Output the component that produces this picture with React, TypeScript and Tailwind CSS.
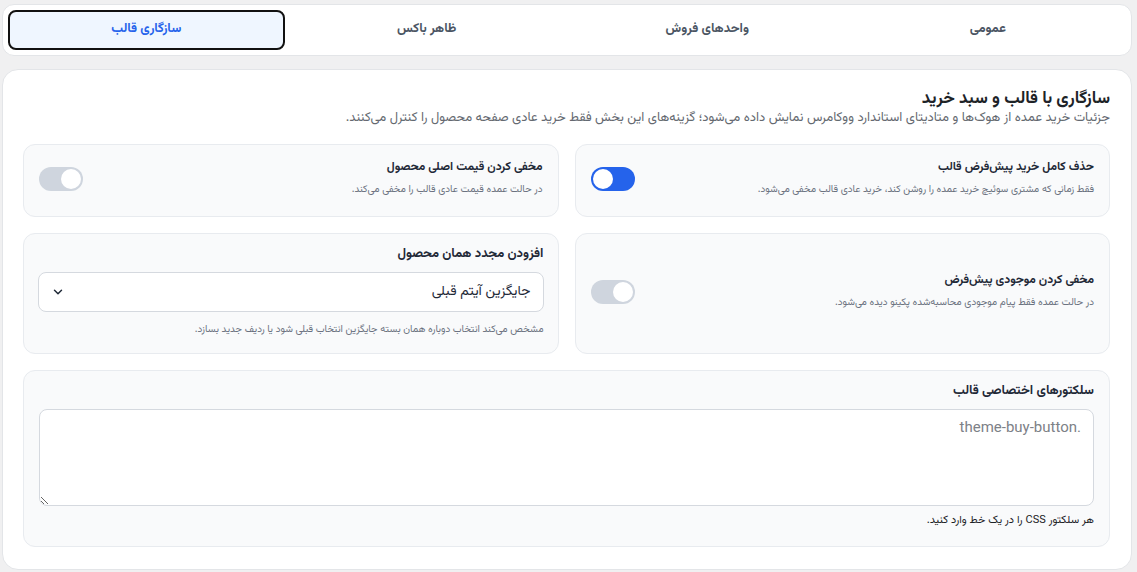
import React from "react";

const FONT = { fontFamily: '"Vazirmatn", "Noto Sans Arabic", "DejaVu Sans", sans-serif' };

function Toggle({ on }: { on: boolean }) {
  return (
    <div
      className={`relative h-6 w-11 shrink-0 rounded-full ${on ? "bg-[#2563eb]" : "bg-[#cfd5de]"}`}
    >
      <div
        className={`absolute top-[2px] h-5 w-5 rounded-full bg-white ${on ? "left-[2px]" : "right-[2px]"}`}
      />
    </div>
  );
}

function ToggleCard({ title, desc, on }: { title: string; desc: string; on: boolean }) {
  return (
    <div className="flex items-center justify-between gap-4 rounded-xl border border-[#e8ebef] bg-[#f9fafb] px-[15px] pb-[16px] pt-[12px]">
      <div className="flex flex-col gap-[3px]">
        <div className="text-[12px] font-bold leading-[20px] text-[#1f2937]">{title}</div>
        <div className="text-[10px] leading-[20px] text-[#6b7280]">{desc}</div>
      </div>
      <Toggle on={on} />
    </div>
  );
}

export default function App() {
  const tabs = ["عمومی", "واحدهای فروش", "ظاهر باکس", "سازگاری قالب"];
  return (
    <div dir="rtl" style={FONT} className="min-h-screen bg-[#f0f0f1] pl-[2px] pr-[5px] pt-[4px]">
      <div className="grid grid-cols-4 gap-1 rounded-xl border border-[#e3e5e8] bg-white p-[5px]">
        {tabs.map((t, i) => (
          <div
            key={t}
            className={`flex h-10 items-center justify-center rounded-lg text-[13px] font-bold ${
              i === 3
                ? "border-2 border-[#111111] bg-[#eff6ff] text-[#2563eb]"
                : "text-[#4b5563]"
            }`}
          >
            {t}
          </div>
        ))}
      </div>

      <div className="mt-[13px] rounded-2xl border border-[#e3e5e8] bg-white pb-[22px] pl-5 pr-[21px] pt-[19px]">
        <div className="text-[17px] font-bold leading-[20px] text-[#1d2327]">
          سازگاری با قالب و سبد خرید
        </div>
        <div className="mb-[17px] text-[13px] leading-[18px] text-[#646970]">
          جزئیات خرید عمده از هوک‌ها و متادیتای استاندارد ووکامرس نمایش داده می‌شود؛ گزینه‌های این بخش فقط خرید عادی صفحه محصول را کنترل می‌کنند.
        </div>

        <div className="grid grid-cols-2 gap-4">
          <ToggleCard
            title="حذف کامل خرید پیش‌فرض قالب"
            desc="فقط زمانی که مشتری سوئیچ خرید عمده را روشن کند، خرید عادی قالب مخفی می‌شود."
            on={true}
          />
          <ToggleCard
            title="مخفی کردن قیمت اصلی محصول"
            desc="در حالت عمده قیمت عادی قالب را مخفی می‌کند."
            on={false}
          />
          <ToggleCard
            title="مخفی کردن موجودی پیش‌فرض"
            desc="در حالت عمده فقط پیام موجودی محاسبه‌شده پکینو دیده می‌شود."
            on={false}
          />
          <div className="rounded-xl border border-[#e8ebef] bg-[#f9fafb] px-[14px] pb-[15px] pt-[10px]">
            <div className="mb-2 text-[13px] font-bold leading-[20px] text-[#1f2937]">
              افزودن مجدد همان محصول
            </div>
            <div className="flex h-10 items-center justify-between rounded-lg border border-[#d5d9df] bg-white pl-3 pr-3">
              <span className="text-[14px] text-[#1f2937]">جایگزین آیتم قبلی</span>
              <svg width="14" height="14" viewBox="0 0 24 24" fill="none" stroke="#1f2937" strokeWidth="2.5" strokeLinecap="round" strokeLinejoin="round">
                <path d="M6 9l6 6 6-6" />
              </svg>
            </div>
            <div className="mt-[10px] text-[10px] leading-[16px] text-[#6b7280]">
              مشخص می‌کند انتخاب دوباره همان بسته جایگزین انتخاب قبلی شود یا ردیف جدید بسازد.
            </div>
          </div>
        </div>

        <div className="mt-4 rounded-xl border border-[#e8ebef] bg-[#f9fafb] px-[15px] pb-[17px] pt-[10px]">
          <div className="mb-2 text-[13px] font-bold leading-[20px] text-[#1f2937]">
            سلکتورهای اختصاصی قالب
          </div>
          <textarea
            dir="rtl"
            placeholder=".theme-buy-button"
            className="block h-[97px] w-full rounded-lg border border-[#d5d9df] bg-white px-3 py-[6px] text-[15px] text-[#1f2937] placeholder:text-[#7d8187]"
            style={{ fontFamily: 'Roboto, "Liberation Sans", sans-serif' }}
          />
          <div className="mt-[7px] text-[11px] leading-[16px] text-[#1d2327]">
            هر سلکتور CSS را در یک خط وارد کنید.
          </div>
        </div>
      </div>
    </div>
  );
}
